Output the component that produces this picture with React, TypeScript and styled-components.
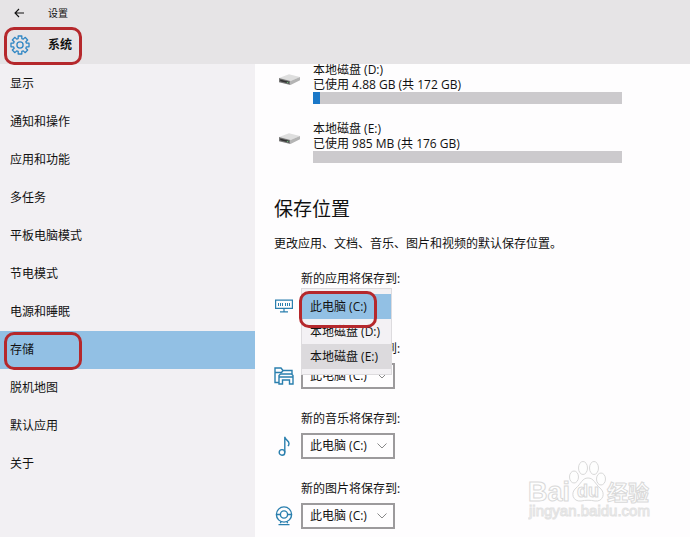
import React, { useState } from "react";
import styled, { createGlobalStyle, css } from "styled-components";

const GlobalStyle = createGlobalStyle`
  *, *::before, *::after { box-sizing: border-box; }
  body {
    margin: 0;
    background: #fefdfe;
    color: #111;
    font-family: "Open Sans", "Noto Sans CJK SC", sans-serif;
    font-size: 12px;
    line-height: 16px;
  }
`;

const Page = styled.div`
  position: relative;
  display: flex;
  flex-direction: column;
  min-height: 100vh;
`;

const Header = styled.header`
  background: #e6e4e6;
  height: 64px;
`;

const TitleBar = styled.div`
  display: flex;
  align-items: center;
  gap: 24px;
  height: 26px;
  padding-left: 14px;
  font-size: 10px;
`;

const BackButton = styled.button`
  display: flex;
  padding: 0;
  border: 0;
  background: none;
  color: #111;
`;

const Section = styled.div`
  position: relative;
  display: flex;
  align-items: center;
  gap: 18px;
  height: 38px;
  padding-left: 10px;
`;

const SectionTitle = styled.h1`
  margin: 0;
  font-size: 12px;
  line-height: 16px;
  font-weight: 700;
`;

const Marker = styled.span`
  position: absolute;
  top: 1px;
  left: 4px;
  width: 78px;
  height: 38px;
  border: 3px solid #b5282c;
  border-radius: 10px;
  pointer-events: none;
`;

const OptionMarker = styled(Marker)`
  top: 2px;
  left: -3px;
  width: 78px;
  height: 37px;
`;

const Body = styled.div`
  display: flex;
  flex: 1;
`;

const Sidebar = styled.nav`
  flex: 0 0 255px;
  padding-top: 1px;
  background: #f2f0f3;
`;

const NavItem = styled.a<{ $active: boolean }>`
  position: relative;
  display: flex;
  align-items: center;
  height: 38px;
  padding-left: 10px;
  color: inherit;
  text-decoration: none;
  background: ${(p) => (p.$active ? "#92c0e4" : "transparent")};
`;

const Main = styled.main`
  flex: 1;
  min-width: 0;
  overflow: hidden;
  padding: 0 19px 8px;
`;

const DriveList = styled.div`
  display: flex;
  flex-direction: column;
  gap: 17px;
  margin-top: -2px;
  padding: 0 49px 0 4px;
`;

const Drive = styled.div`
  display: flex;
  gap: 12px;
`;

const DriveIconBox = styled.div`
  display: flex;
  padding-top: 11px;
  flex: 0 0 23px;
`;

const DriveInfo = styled.div`
  flex: 1;
  line-height: 15px;
`;

const Meter = styled.div`
  height: 12px;
  background: #cccacd;
`;

const MeterFill = styled.div`
  height: 100%;
  background: #1b78c8;
`;

const Heading = styled.h2`
  margin: 34px 0 0;
  font-size: 19px;
  line-height: 24px;
  font-weight: 400;
`;

const Description = styled.p`
  margin: 15px 0 0;
`;

const SaveList = styled.div`
  display: flex;
  flex-direction: column;
  gap: 22px;
  margin-top: 19px;
`;

const SaveRow = styled.div`
  display: grid;
  grid-template-columns: 20px 1fr;
  column-gap: 7px;
  row-gap: 6px;
`;

const saveLabel = css`
  grid-column: 2;
  justify-self: start;
`;

const SaveLabel = styled.label`
  ${saveLabel}
`;

const SaveCaption = styled.span`
  ${saveLabel}
`;

const IconCell = styled.div`
  display: flex;
  align-items: center;
  justify-content: center;
  height: 26px;
`;

const SelectBox = styled.div`
  position: relative;
  justify-self: start;
  width: 94px;
  height: 26px;
`;

const Select = styled.select`
  appearance: none;
  width: 100%;
  height: 100%;
  padding: 0 0 0 7px;
  border: 2px solid #9c9a9c;
  border-radius: 0;
  background: #fefdfe;
  color: inherit;
  font: inherit;
`;

const Chevron = styled.svg`
  position: absolute;
  top: 10px;
  right: 8px;
  pointer-events: none;
`;

const Popup = styled.div`
  position: absolute;
  z-index: 1;
  top: -5px;
  left: 0;
  width: 91px;
  padding: 5px 0;
  border: 1px solid #dddbde;
  background: #f3f1f4;
`;

const Option = styled.button<{ $tone: "selected" | "plain" | "hover" }>`
  display: block;
  width: 100%;
  height: 25px;
  padding: 0 0 0 8px;
  border: 0;
  color: inherit;
  font: inherit;
  text-align: left;
  white-space: nowrap;
  background: ${(p) =>
    ({ selected: "#92c0e4", plain: "transparent", hover: "#dcdadd" })[p.$tone]};
`;

const Watermark = styled.svg`
  position: absolute;
  right: 36px;
  bottom: 14px;
  pointer-events: none;
`;

const BLUE = "#2a7fae";

const GEAR = (() => {
  const pts: string[] = [];
  const teeth = 8;
  for (let i = 0; i < teeth; i++) {
    const mid = (i / teeth) * Math.PI * 2 - Math.PI / 2;
    const add = (r: number, d: number) =>
      pts.push(
        `${(10 + r * Math.cos(mid + d)).toFixed(2)} ${(10 + r * Math.sin(mid + d)).toFixed(2)}`
      );
    add(6.7, -0.27);
    add(9.2, -0.2);
    add(9.2, 0.2);
    add(6.7, 0.27);
  }
  return `M${pts.join("L")}Z`;
})();

const GearIcon = () => (
  <svg width="20" height="20" viewBox="0 0 20 20" fill="none" stroke="#2f86c4" strokeWidth="1.3" strokeLinejoin="round">
    <path d={GEAR} />
    <circle cx="10" cy="10" r="3.1" />
  </svg>
);

const BackIcon = () => (
  <svg width="10" height="10" viewBox="0 0 10 10" fill="none" stroke="currentColor" strokeWidth="1.1">
    <path d="M10 5H1M5 1L1 5l4 4" />
  </svg>
);

const DriveIcon = () => (
  <svg width="23" height="14" viewBox="0 0 23 14">
    <path d="M1 5L11 1.2 22 4 12.5 8z" fill="#dedede" />
    <path d="M1 5L12.5 8V12L1 9.2z" fill="#777" />
    <path d="M12.5 8L22 4v3.2L12.5 12z" fill="#b4b4b4" />
    <path d="M2.2 6.4L11 8.7v1.7L2.2 8.2z" fill="#333" />
    <path d="M8.8 9h1.6v1H8.8z" fill="#6fae7a" />
  </svg>
);

const AppsIcon = () => (
  <svg width="18" height="14" viewBox="0 0 18 14" fill="none" stroke={BLUE}>
    <path d="M.6 1.1h16.8v8.3H.6z" strokeWidth="1.2" />
    <path d="M3.5 4v3M5.5 4v3M7.5 4v3M10.5 4v3M12.5 4v3M14.5 4v3" strokeWidth="1" />
    <path d="M9 9.5V12.5M5 12.8h8" strokeWidth="1.2" />
  </svg>
);

const DocumentsIcon = () => (
  <svg width="20" height="18" viewBox="0 0 20 18" fill="none" stroke={BLUE} strokeWidth="1.4">
    <path d="M5 15.5H1V1h6l2 2.5h9V7" />
    <path d="M1 5.5h6.5l1.5-2" />
    <path d="M5 17V8.5L6.5 7h11L19 8.5V17h-3.5v-4h-7v4zM5.5 10h13" />
  </svg>
);

const MusicIcon = () => (
  <svg width="12" height="20" viewBox="0 0 12 20" fill="none" stroke={BLUE} strokeWidth="1.4">
    <circle cx="4" cy="16.4" r="2.8" />
    <path d="M6.8 16.4V.8C6.8 4 11 4.2 11 7.4c0 1.2-.4 2-1 2.8" />
  </svg>
);

const CameraIcon = () => (
  <svg width="18" height="20" viewBox="0 0 18 20" fill="none" stroke={BLUE} strokeWidth="1.4">
    <circle cx="9" cy="8.5" r="7.6" />
    <circle cx="9" cy="8.5" r="3.6" />
    <path d="M1.4 8.5h4M12.6 8.5h4M6 15.5l-.6 1.8M12 15.5l.6 1.8M3.5 18.6h11" />
  </svg>
);

const navItems = [
  "显示",
  "通知和操作",
  "应用和功能",
  "多任务",
  "平板电脑模式",
  "节电模式",
  "电源和睡眠",
  "存储",
  "脱机地图",
  "默认应用",
  "关于",
];

const disks = ["此电脑 (C:)", "本地磁盘 (D:)", "本地磁盘 (E:)"];

const drives = [
  { name: "本地磁盘 (D:)", usage: "已使用 4.88 GB (共 172 GB)", percent: 2.2 },
  { name: "本地磁盘 (E:)", usage: "已使用 985 MB (共 176 GB)", percent: 0 },
];

const saves = [
  { id: "documents", label: "新的文档将保存到:", icon: <DocumentsIcon /> },
  { id: "music", label: "新的音乐将保存到:", icon: <MusicIcon /> },
  { id: "pictures", label: "新的图片将保存到:", icon: <CameraIcon /> },
];

const BaiduMark = () => (
  <Watermark width="126" height="64" viewBox="0 0 126 64" fill="#fefefe" stroke="#d9d9d9" strokeWidth="1" aria-hidden="true">
    <g fontFamily="Liberation Sans, sans-serif" fontWeight="700">
      <text x="0" y="42" fontSize="27">Bai</text>
      <ellipse cx="46" cy="18" rx="4.5" ry="6" />
      <ellipse cx="55" cy="9" rx="4.5" ry="6.5" />
      <ellipse cx="66" cy="9" rx="4.5" ry="6.5" />
      <ellipse cx="73" cy="20" rx="4.5" ry="6" />
      <path d="M60 19c6 0 7 6 12 10 6 5 3 14-5 13-5-1-9-1-14 0-8 1-11-8-5-13 5-4 6-10 12-10z" />
      <text x="49" y="38" fontSize="18">du</text>
    </g>
    <text x="79" y="41" fontSize="21" fontWeight="700" fontFamily="Noto Sans CJK SC, sans-serif">经验</text>
    <text x="1" y="57" fontSize="15" fontFamily="Liberation Sans, sans-serif" stroke="#e2e2e2">jingyan.baidu.com</text>
  </Watermark>
);

export default function App() {
  const [active, setActive] = useState("存储");

  return (
    <>
      <GlobalStyle />
      <Page>
        <Header>
          <TitleBar>
            <BackButton aria-label="返回">
              <BackIcon />
            </BackButton>
            <span>设置</span>
          </TitleBar>
          <Section>
            <GearIcon />
            <SectionTitle>系统</SectionTitle>
            <Marker />
          </Section>
        </Header>
        <Body>
          <Sidebar>
            {navItems.map((name) => (
              <NavItem key={name} href="#" $active={name === active} onClick={() => setActive(name)}>
                {name}
                {name === active && <Marker />}
              </NavItem>
            ))}
          </Sidebar>
          <Main>
            <DriveList>
              {drives.map((d) => (
                <Drive key={d.name}>
                  <DriveIconBox>
                    <DriveIcon />
                  </DriveIconBox>
                  <DriveInfo>
                    <div>{d.name}</div>
                    <div>{d.usage}</div>
                    <Meter>
                      <MeterFill style={{ width: `${d.percent}%` }} />
                    </Meter>
                  </DriveInfo>
                </Drive>
              ))}
            </DriveList>
            <Heading>保存位置</Heading>
            <Description>更改应用、文档、音乐、图片和视频的默认保存位置。</Description>
            <SaveList>
              <SaveRow>
                <SaveCaption id="apps-label">新的应用将保存到:</SaveCaption>
                <IconCell>
                  <AppsIcon />
                </IconCell>
                <SelectBox>
                  <Popup role="listbox" aria-labelledby="apps-label">
                    <Option role="option" aria-selected="true" $tone="selected">{disks[0]}</Option>
                    <Option role="option" aria-selected="false" $tone="plain">{disks[1]}</Option>
                    <Option role="option" aria-selected="false" $tone="hover">{disks[2]}</Option>
                    <OptionMarker />
                  </Popup>
                </SelectBox>
              </SaveRow>
              {saves.map((s) => (
                <SaveRow key={s.id}>
                  <SaveLabel htmlFor={s.id}>{s.label}</SaveLabel>
                  <IconCell>{s.icon}</IconCell>
                  <SelectBox>
                    <Select id={s.id} defaultValue={disks[0]}>
                      {disks.map((d) => (
                        <option key={d}>{d}</option>
                      ))}
                    </Select>
                    <Chevron width="10" height="6" viewBox="0 0 10 6" fill="none" stroke="#888">
                      <path d="M.5.5L5 5 9.500.5" />
                    </Chevron>
                  </SelectBox>
                </SaveRow>
              ))}
            </SaveList>
          </Main>
        </Body>
        <BaiduMark />
      </Page>
    </>
  );
}
